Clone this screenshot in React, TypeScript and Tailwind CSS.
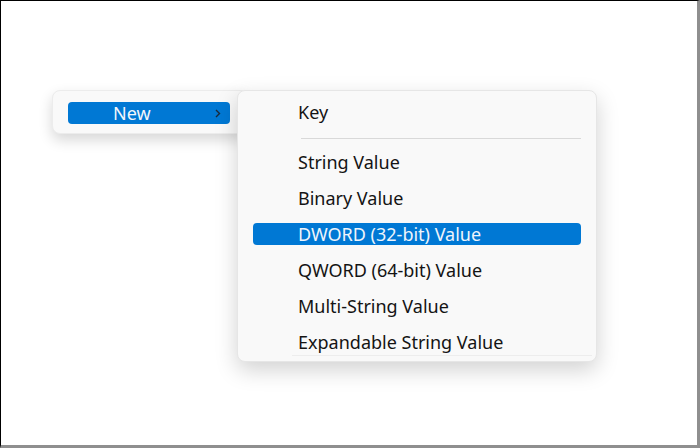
import React from 'react';

const ITEMS = [
  'String Value',
  'Binary Value',
  'DWORD (32-bit) Value',
  'QWORD (64-bit) Value',
  'Multi-String Value',
  'Expandable String Value',
];

const font = { fontFamily: '"Noto Sans", "Open Sans", sans-serif' };

export default function App() {
  return (
    <div
      className="relative w-[700px] h-[448px] bg-white border-t border-l border-black border-r-[3px] border-b-[3px] border-r-[#8f8f8f] border-b-[#8f8f8f] overflow-hidden"
      style={font}
    >
      {/* parent menu */}
      <div className="absolute left-[51px] top-[89px] w-[196px] h-[44px] rounded-[8px] bg-[#f9f9f9] border border-[#ececec] shadow-[0_6px_14px_rgba(0,0,0,0.16)] px-[15px] pt-[11px]">
        <div className="flex items-center h-[22px] w-[162px] rounded-[4px] bg-[#0078d4] text-[#f2f6fb] text-[18px] leading-[22px] pl-[45px] pr-[9px]">
          <span className="flex-1">New</span>
          <svg width="6" height="9" viewBox="0 0 6 9" fill="none">
            <path d="M1 1l3.5 3.5L1 8" stroke="#1b2a3a" strokeWidth="1.4" />
          </svg>
        </div>
      </div>

      {/* submenu */}
      <div className="absolute left-[236px] top-[89px] w-[360px] h-[272px] rounded-[8px] bg-[#f9f9f9] border border-[#e6e6e6] shadow-[0_8px_22px_rgba(0,0,0,0.18)] px-[15px] pt-[10px] text-[#141414] text-[18px] flex flex-col">
        <div className="h-[22px] leading-[22px] pl-[45px]">Key</div>
        <div className="ml-[48px] mt-[15px] h-px bg-[#d9d9d9]" />
        <div className="flex flex-col gap-[14px] mt-[12px]">
          {ITEMS.map((label) => {
            const active = label.startsWith('DWORD');
            return (
              <div
                key={label}
                className={`h-[22px] leading-[22px] pl-[45px] rounded-[4px] ${active ? 'bg-[#0078d4] text-[#eef4fb]' : ''}`}
              >
                {label}
              </div>
            );
          })}
        </div>
        <div className="ml-[39px] mr-[-11px] mt-[2px] h-px bg-[#ededed]" />
      </div>
    </div>
  );
}
